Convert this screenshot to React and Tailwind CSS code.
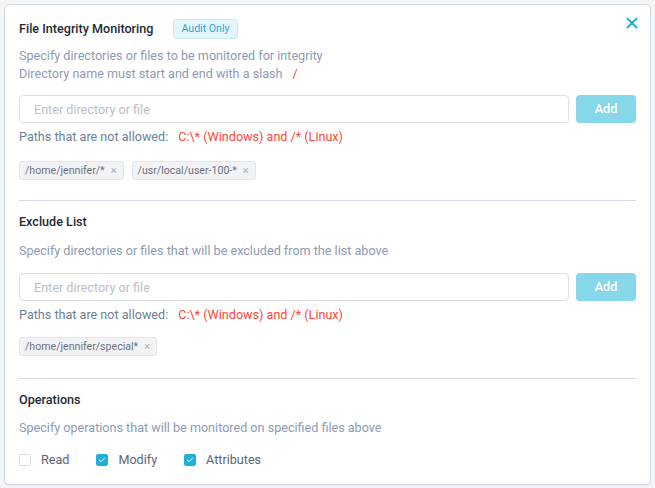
import { X, Check } from 'lucide-react';

const FONT = { fontFamily: 'Roboto, "Liberation Sans", sans-serif' };

function PathTag({ label }) {
  return (
    <span className="inline-flex h-[19px] items-center gap-[6px] rounded-[3px] border border-[#e2e5ea] bg-[#f1f3f6] pl-[5px] pr-[6px] text-[10.6px] text-[#6a717d]">
      {label}
      <span className="text-[11px] leading-none text-[#a9aeb7]">×</span>
    </span>
  );
}

function PathInput({ top }) {
  return (
    <div className={`${top} flex gap-[7px]`}>
      <input
        type="text"
        placeholder="Enter directory or file"
        className="h-[28px] flex-1 rounded-[4px] border border-[#dcdfe6] bg-white px-[14px] text-[12.6px] text-[#4b5565] placeholder:text-[#b9bec8] focus:outline-none"
      />
      <button
        type="button"
        className="h-[28px] w-[60px] rounded-[4px] bg-[#87d7eb] text-[12.6px] font-medium text-white"
      >
        Add
      </button>
    </div>
  );
}

function NotAllowed({ top }) {
  return (
    <p className={`${top} text-[12.6px] leading-[18px] text-[#6c7f99]`}>
      Paths that are not allowed:
      <span className="ml-[10px] text-[#f4493e]">C:\* (Windows) and /* (Linux)</span>
    </p>
  );
}

function Checkbox({ label, checked }) {
  return (
    <label className="flex items-center gap-[10px] text-[12.6px] text-[#5c6577]">
      <span
        className={
          checked
            ? 'flex h-[12px] w-[12px] items-center justify-center rounded-[2px] bg-[#1eb0d8]'
            : 'h-[12px] w-[12px] rounded-[2px] border border-[#d6dae2] bg-white'
        }
      >
        {checked && <Check className="h-[8px] w-[8px] text-white" strokeWidth={3} />}
      </span>
      {label}
    </label>
  );
}

export default function App() {
  return (
    <div className="min-h-[488px] bg-[#f3f5f9] p-[4px]" style={FONT}>
      <div className="rounded-[5px] border border-[#d3dbe6] bg-white px-[14px] pb-[15px] pt-[14px] shadow-[0_1px_2px_rgba(0,0,0,0.06)]">
        {/* Header */}
        <div className="flex h-[20px] items-center">
          <h2 className="text-[12.6px] font-medium text-[#1f2a37]">File Integrity Monitoring</h2>
          <span className="ml-[20px] inline-flex h-[20px] items-center rounded-[3px] border border-[#c3ebf6] bg-[#e4f6fb] px-[7px] text-[10.6px] text-[#2aa8d0]">
            Audit Only
          </span>
          <button type="button" className="ml-auto mr-[-5px] mt-[-5px] self-start text-[#1fb2da]">
            <X className="h-[18px] w-[18px]" strokeWidth={2.5} />
          </button>
        </div>

        <div className="mt-[8px] text-[12.6px] leading-[18px] text-[#8d9bb4]">
          <p>Specify directories or files to be monitored for integrity</p>
          <p>
            Directory name must start and end with a slash
            <span className="ml-[10px] text-[#f4493e]">/</span>
          </p>
        </div>

        <PathInput top="mt-[12px]" />
        <NotAllowed top="mt-[5px]" />

        <div className="mt-[15px] flex gap-[8px]">
          <PathTag label="/home/jennifer/*" />
          <PathTag label="/usr/local/user-100-*" />
        </div>

        <div className="mt-[20px] border-t border-[#d3dbe5]" />

        {/* Exclude list */}
        <h3 className="mt-[12px] text-[12.6px] font-medium leading-[18px] text-[#1f2a37]">Exclude List</h3>
        <p className="mt-[11px] text-[12.6px] leading-[18px] text-[#8d9bb4]">
          Specify directories or files that will be excluded from the list above
        </p>

        <PathInput top="mt-[13px]" />
        <NotAllowed top="mt-[5px]" />

        <div className="mt-[13px] flex gap-[8px]">
          <PathTag label="/home/jennifer/special*" />
        </div>

        <div className="mt-[22px] border-t border-[#d3dbe5]" />

        {/* Operations */}
        <h3 className="mt-[12px] text-[12.6px] font-medium leading-[18px] text-[#1f2a37]">Operations</h3>
        <p className="mt-[10px] text-[12.6px] leading-[18px] text-[#8d9bb4]">
          Specify operations that will be monitored on specified files above
        </p>

        <div className="mt-[14px] flex h-[18px] items-center gap-[27px]">
          <Checkbox label="Read" />
          <Checkbox label="Modify" checked />
          <Checkbox label="Attributes" checked />
        </div>
      </div>
    </div>
  );
}
